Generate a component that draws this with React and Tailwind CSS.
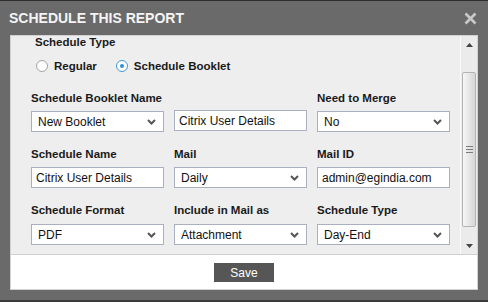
import React from "react";

const FONT = { fontFamily: '"Liberation Sans", Arial, sans-serif' };

function Chevron() {
  return (
    <svg width="9" height="6" viewBox="0 0 9 6" className="shrink-0">
      <path d="M1 1 L4.5 4.5 L8 1" fill="none" stroke="#555" strokeWidth="2" />
    </svg>
  );
}

function Select({ value }) {
  return (
    <div className="h-[21px] w-[133px] border border-[#aab0bf] bg-white flex items-center justify-between pl-[6px] pr-[7px] text-[12px] text-[#111]">
      <span>{value}</span>
      <Chevron />
    </div>
  );
}

function Input({ value, up }) {
  return (
    <div
      className={
        "h-[21px] w-[133px] border border-[#aab0bf] bg-white flex items-center pl-[4px] text-[12px] text-[#111] " +
        (up ? "-mt-px" : "")
      }
    >
      <span>{value}</span>
    </div>
  );
}

function Label({ children }) {
  return (
    <div className="h-[12px] leading-[12px] text-[11.5px] font-bold text-[#1a1a1a] whitespace-nowrap">
      {children}
    </div>
  );
}

function Radio({ checked, label }) {
  return (
    <div className="flex items-center gap-[6px]">
      <div
        className={
          "w-[12px] h-[12px] rounded-full border bg-white flex items-center justify-center " +
          (checked ? "border-[#3d9ad6]" : "border-[#a3a3a3]")
        }
      >
        {checked && <div className="w-[4px] h-[4px] rounded-full bg-[#2f8fd3]" />}
      </div>
      <span className="text-[11.5px] font-bold leading-[12px] text-[#1a1a1a]">{label}</span>
    </div>
  );
}

export default function App() {
  return (
    <div
      className="w-[488px] h-[302px] bg-[#6a6a6a] border-t border-[#2e2e2e] border-b-2 border-b-[#3a3a3a] flex flex-col"
      style={FONT}
    >
      <div className="h-[34px] flex items-center justify-between pl-[9px] pr-[11px]">
        <span className="text-[14px] font-bold text-[#f4f4f4] leading-none tracking-[0px]">
          SCHEDULE THIS REPORT
        </span>
        <svg width="13" height="13" viewBox="0 0 13 13">
          <path d="M1.5 1.5 L11.5 11.5 M11.5 1.5 L1.5 11.5" stroke="#c9c9c9" strokeWidth="2.6" />
        </svg>
      </div>

      <div className="mx-[10px] h-[255px] border border-[#d2d2d2] flex flex-col bg-white">
        <div className="h-[218px] flex bg-[#eeeeee]">
          <div className="flex-1 pl-[20px]">
            <div className="pl-[4px]">
              <Label>Schedule Type</Label>
            </div>
            <div className="flex items-center gap-[19px] pl-[5px] mt-[12px]">
              <Radio label="Regular" />
              <Radio checked label="Schedule Booklet" />
            </div>

            <div className="grid grid-cols-[133px_133px_133px] gap-x-[10px] mt-[20px]">
              <Label>Schedule Booklet Name</Label>
              <div />
              <Label>Need to Merge</Label>
            </div>
            <div className="grid grid-cols-[133px_133px_133px] gap-x-[10px] mt-[7px] items-start">
              <Select value="New Booklet" />
              <Input value="Citrix User Details" up />
              <Select value="No" />
            </div>

            <div className="grid grid-cols-[133px_133px_133px] gap-x-[10px] mt-[16px]">
              <Label>Schedule Name</Label>
              <Label>Mail</Label>
              <Label>Mail ID</Label>
            </div>
            <div className="grid grid-cols-[133px_133px_133px] gap-x-[10px] mt-[7px]">
              <Input value="Citrix User Details" />
              <Select value="Daily" />
              <Input value="admin@egindia.com" />
            </div>

            <div className="grid grid-cols-[133px_133px_133px] gap-x-[10px] mt-[16px]">
              <Label>Schedule Format</Label>
              <Label>Include in Mail as</Label>
              <Label>Schedule Type</Label>
            </div>
            <div className="grid grid-cols-[133px_133px_133px] gap-x-[10px] mt-[8px]">
              <Select value="PDF" />
              <Select value="Attachment" />
              <Select value="Day-End" />
            </div>
          </div>

          <div className="w-[17px] border-l border-[#fafafa] bg-[#ebebeb] flex flex-col items-center">
            <svg width="7" height="4" viewBox="0 0 7 4" className="mt-[7px]">
              <path d="M0 4 L3.5 0 L7 4 Z" fill="#444" />
            </svg>
            <div className="mt-[25px] w-[14px] h-[155px] rounded-[2px] border border-[#b4b4b4] bg-gradient-to-r from-[#f7f7f7] to-[#d6d6d6] flex flex-col items-center justify-center gap-[2px]">
              <div className="w-[7px] h-px bg-[#7a7a7a]" />
              <div className="w-[7px] h-px bg-[#7a7a7a]" />
              <div className="w-[7px] h-px bg-[#7a7a7a]" />
            </div>
            <svg width="7" height="4" viewBox="0 0 7 4" className="mt-[17px]">
              <path d="M0 0 L3.5 4 L7 0 Z" fill="#444" />
            </svg>
          </div>
        </div>

        <div className="border-t border-[#d0d0d0] h-[35px] bg-white flex justify-center pt-[8px]">
          <div className="w-[60px] h-[19px] bg-[#565656] text-white text-[12px] flex items-center justify-center">
            Save
          </div>
        </div>
      </div>
    </div>
  );
}
